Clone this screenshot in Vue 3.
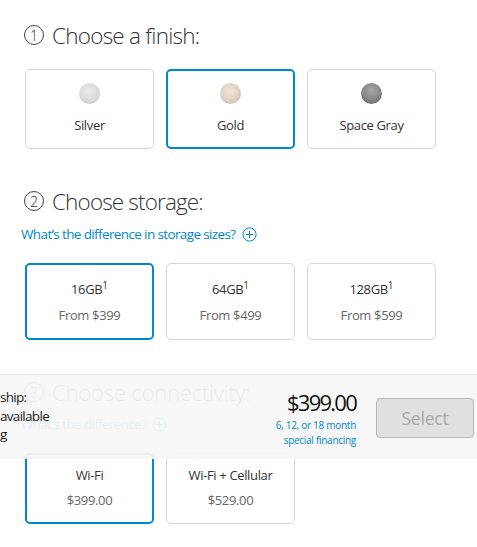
<template>
  <div class="page">
    <section class="step first">
      <h2 class="title"><span class="num">1</span>Choose a finish:</h2>
      <div class="options finish">
        <button v-for="f in finishes" :key="f.name" class="card" :class="{ selected: f.name === 'Gold' }">
          <span class="swatch" :style="{ background: f.swatch }"></span>
          <span class="name">{{ f.name }}</span>
        </button>
      </div>
    </section>

    <section class="step second">
      <h2 class="title"><span class="num">2</span>Choose storage:</h2>
      <a class="link">What’s the difference in storage sizes?<svg class="plus" viewBox="0 0 15 15"><circle cx="7.5" cy="7.5" r="6.6" /><path d="M7.5 4v7M4 7.5h7" /></svg></a>
      <div class="options storage">
        <button v-for="s in storage" :key="s.size" class="card" :class="{ selected: s.size === '16GB' }">
          <span class="name">{{ s.size }}<sup>1</sup></span>
          <span class="price">From {{ s.price }}</span>
        </button>
      </div>
    </section>

    <section class="step third">
      <h2 class="title"><span class="num">3</span>Choose connectivity:</h2>
      <a class="link">What’s the difference?<svg class="plus" viewBox="0 0 15 15"><circle cx="7.5" cy="7.5" r="6.6" /><path d="M7.5 4v7M4 7.5h7" /></svg></a>
      <div class="options connectivity">
        <button v-for="c in connectivity" :key="c.name" class="card" :class="{ selected: c.name === 'Wi-Fi' }">
          <span class="name">{{ c.name }}</span>
          <span class="price">{{ c.price }}</span>
        </button>
      </div>
    </section>

    <div class="summary">
      <div class="ship">
        <p>ship:</p>
        <p>available</p>
        <p>g</p>
      </div>
      <div class="total">
        <div class="amount">$399.00</div>
        <a class="financing">6, 12, or 18 month<br />special financing</a>
      </div>
      <button class="select" disabled>Select</button>
    </div>
  </div>
</template>

<script setup>
const finishes = [
  { name: 'Silver', swatch: 'radial-gradient(circle at 45% 40%, #ebebeb 0%, #dcdcdc 50%, #bdbdbd 100%)' },
  { name: 'Gold', swatch: 'radial-gradient(circle at 45% 40%, #eee5da 0%, #e0d3c4 50%, #c2b19c 100%)' },
  { name: 'Space Gray', swatch: 'radial-gradient(circle at 50% 35%, #a6a6a6 0%, #8a8a8a 50%, #5e5e5e 100%)' }
];
const storage = [
  { size: '16GB', price: '$399' },
  { size: '64GB', price: '$499' },
  { size: '128GB', price: '$599' }
];
const connectivity = [
  { name: 'Wi-Fi', price: '$399.00' },
  { name: 'Wi-Fi + Cellular', price: '$529.00' }
];
</script>

<style>
html, body {
  background: #fff;
  overflow: hidden;
}
</style>

<style scoped>
.page {
  position: relative;
  width: 477px;
  height: 547px;
  overflow: hidden;
  font-family: "Open Sans", "Noto Sans", sans-serif;
  color: #333;
}
.step {
  padding-left: 25px;
}
.first {
  padding-top: 21px;
}
.second {
  padding-top: 38px;
}
.third {
  padding-top: 38px;
}
.title {
  display: flex;
  align-items: center;
  margin: 0;
  height: 28px;
  font-size: 22.5px;
  font-weight: 300;
  letter-spacing: -0.75px;
  color: #333;
}
.second .title {
  letter-spacing: -0.85px;
}
.third .title {
  letter-spacing: -0.45px;
}
.num {
  display: inline-flex;
  align-items: center;
  justify-content: center;
  box-sizing: border-box;
  width: 20px;
  height: 20px;
  margin-right: 8px;
  margin-left: -1px;
  border: 1px solid #444;
  border-radius: 50%;
  font-size: 14px;
  letter-spacing: 0;
}
.link {
  display: flex;
  align-items: center;
  height: 20px;
  margin: 9px 0 0 -4px;
  font-size: 13.5px;
  letter-spacing: -0.62px;
  color: #0088cc;
}
.third .link {
  margin-top: 8px;
}
.plus {
  width: 15px;
  height: 15px;
  margin-left: 6px;
  fill: none;
  stroke: #0088cc;
  stroke-width: 1;
}
.options {
  display: grid;
  grid-template-columns: repeat(3, 129px);
  column-gap: 12px;
}
.finish {
  margin-top: 20px;
}
.storage {
  margin-top: 19px;
}
.connectivity {
  margin-top: 19px;
}
.card {
  display: flex;
  flex-direction: column;
  align-items: center;
  box-sizing: border-box;
  padding: 0;
  border: 1px solid #d6d6d6;
  border-radius: 5px;
  background: #fff;
  font-family: inherit;
  color: #333;
}
.finish .card {
  height: 80px;
  padding-top: 13px;
}
.storage .card {
  height: 77px;
  padding-top: 15px;
}
.connectivity .card {
  height: 71px;
  padding-top: 11px;
}
.card.selected {
  border: 2px solid #0088cc;
}
.finish .card.selected {
  padding-top: 12px;
}
.storage .card.selected {
  padding-top: 14px;
}
.connectivity .card.selected {
  padding-top: 10px;
}
.swatch {
  width: 21px;
  height: 21px;
  border-radius: 50%;
}
.name {
  font-size: 13px;
  letter-spacing: -0.35px;
  line-height: 20px;
}
.finish .name {
  margin-top: 11px;
}
.name sup {
  font-size: 10px;
  line-height: 0;
  letter-spacing: 0;
  vertical-align: 5px;
}
.price {
  margin-top: 6px;
  font-size: 13px;
  letter-spacing: -0.35px;
  line-height: 20px;
  color: #666;
}
.connectivity .price {
  margin-top: 5px;
}
.summary {
  position: absolute;
  left: 0;
  top: 374px;
  display: flex;
  align-items: flex-start;
  box-sizing: border-box;
  width: 477px;
  height: 85px;
  border-top: 1px solid #e6e6e6;
  background: rgba(247, 247, 247, 0.94);
}
.ship {
  width: 60px;
  padding-top: 13px;
  font-size: 13.5px;
  letter-spacing: -0.7px;
  line-height: 18.5px;
  color: #222;
}
.ship p {
  margin: 0;
}
.total {
  margin-left: auto;
  padding-top: 14px;
  text-align: right;
}
.amount {
  font-size: 22px;
  letter-spacing: -1.75px;
  line-height: 27px;
  color: #111;
}
.financing {
  display: block;
  margin-top: 2px;
  font-size: 10px;
  letter-spacing: -0.28px;
  line-height: 15px;
  color: #0088cc;
}
.select {
  width: 98px;
  height: 40px;
  margin: 23px 3px 0 20px;
  padding: 0;
  border: 1px solid #b8b8b8;
  border-radius: 4px;
  background: #e0e0e0;
  font-family: inherit;
  font-size: 17.5px;
  letter-spacing: -0.2px;
  color: #a8a8a8;
}
</style>
